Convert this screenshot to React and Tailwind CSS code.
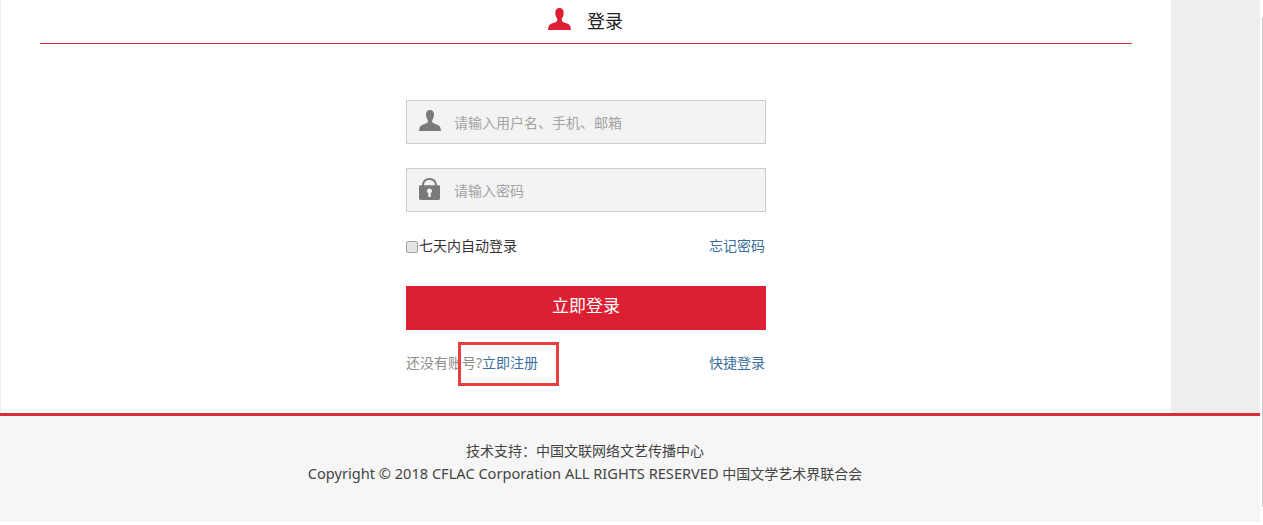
import React from 'react';

const FONT = "font-['Noto_Sans','Noto_Sans_CJK_SC',sans-serif]";

function PersonIcon({ className }) {
    return (
        <svg className={className} viewBox="0 0 23 22" fill="currentColor">
            <path d="M11.500 0C8.800 0 7.300 2 7.300 4.800c0 2.300.7 4.400 1.900 5.800v2.300c-1.200 1.100-3.200 1.800-5.300 2.500C1.500 16.300.4 17.200 0 22h23c-.4-4.800-1.500-5.700-3.900-6.600-2.100-.7-4.100-1.400-5.300-2.500v-2.300c1.200-1.400 1.900-3.500 1.900-5.800C15.700 2 14.200 0 11.500 0z" />
        </svg>
    );
}

function LockIcon({ className }) {
    return (
        <svg className={className} viewBox="0 0 22 23" fill="currentColor">
            <path
                fillRule="evenodd"
                d="M11 0C6.200 0 3.200 3.200 3.200 7.500H1.500C.6 7.500 0 8.100 0 9v12.500C0 22.400.6 23 1.500 23h19c.9 0 1.500-.6 1.500-1.500V9c0-.9-.6-1.500-1.500-1.500h-1.700C18.800 3.200 15.800 0 11 0zm0 2c3.500 0 5.700 2.200 5.700 5.500H5.300C5.300 4.200 7.500 2 11 2zm0 9c1.500 0 2.600 1.100 2.600 2.500 0 1-.5 1.800-1.300 2.200V20H9.700v-4.300c-.8-.4-1.300-1.200-1.300-2.200C8.400 12.100 9.500 11 11 11z"
            />
        </svg>
    );
}

function InputRow({ icon, placeholder }) {
    return (
        <div className="h-[44px] flex items-center border border-[#cccccc] bg-[#f3f3f3]">
            <div className="w-[47px] flex justify-center">{icon}</div>
            <span className="text-[14px] leading-[20px] text-[#a3a3a3] mt-[2px]">{placeholder}</span>
        </div>
    );
}

export default function App() {
    return (
        <div className={`${FONT} w-[1263px] h-[525px] overflow-hidden bg-white flex`}>
            <div className="w-[1260px] flex flex-col">
                <div className="flex h-[413px] shrink-0">
                    {/* main column */}
                    <div className="w-[1171px] border-l border-[#eeeeee] pl-[39px] pr-[39px]">
                        <div className="h-[44px] border-b border-[#d42a3c] flex items-center justify-center pb-[2px]">
                            <PersonIcon className="w-[23px] h-[22px] text-[#dd1f33] mr-[16px] -ml-[1px] mb-[3px]" />
                            <span className="text-[18px] leading-[24px] text-[#222222]">登录</span>
                        </div>

                        <div className="w-[360px] mx-auto pt-[56px]">
                            <InputRow
                                icon={<PersonIcon className="w-[22px] h-[21px] text-[#7a7a7a] -ml-[2px] mb-[3px]" />}
                                placeholder="请输入用户名、手机、邮箱"
                            />
                            <div className="mt-[24px]">
                                <InputRow
                                    icon={<LockIcon className="w-[21px] h-[22px] text-[#7a7a7a] -ml-[2px] mb-[2px]" />}
                                    placeholder="请输入密码"
                                />
                            </div>

                            <div className="h-[24px] mt-[21px] flex items-center justify-between text-[14px]">
                                <label className="flex items-center text-[#333333]">
                                    <span className="w-[12px] h-[12px] rounded-[2px] border border-[#a0a0a0] bg-[#e4e4e4] mt-[3px] mr-[1px]" />
                                    七天内自动登录
                                </label>
                                <a className="text-[#3a6f9f] -ml-[1px] pr-[1px]">忘记密码</a>
                            </div>

                            <button className="block w-full h-[44px] mt-[29px] bg-[#dd1f33] text-white text-[17px] leading-[24px] pb-[5px]">
                                立即登录
                            </button>

                            <div className="relative h-[24px] mt-[20px] flex items-center justify-between text-[14px]">
                                <span className="text-[#8c8c8c]">
                                    还没有账号?<a className="text-[#3a6f9f]">立即注册</a>
                                </span>
                                <a className="text-[#3a6f9f] pr-[1px]">快捷登录</a>
                                {/* annotation box sits over the link */}
                                <div className="absolute left-[52px] -top-[8px] w-[101px] h-[44px] border-[3px] border-[#ea3e3e]" />
                            </div>
                        </div>
                    </div>
                    <div className="w-[89px] bg-[#eeeeee]" />
                </div>

                {/* footer */}
                <div className="h-[109px] border-t-[3px] border-[#db2c3c] bg-[#f6f6f6] pt-[24px] text-center text-[14px] leading-[22px] text-[#444444]">
                    <p className="pr-[89px] -ml-[1px]">技术支持：中国文联网络文艺传播中心</p>
                    <p className="pr-[89px] -ml-[1px]">
                        <span className="text-[14.6px]">Copyright © 2018 CFLAC Corporation ALL RIGHTS RESERVED</span> 中国文学艺术界联合会
                    </p>
                </div>
            </div>

            {/* thin edge line at the far right */}
            <div className="w-[3px] pt-[18px] pl-[2px]">
                <div className="w-px h-[489px] bg-[#cccccc]" />
            </div>
        </div>
    );
}
